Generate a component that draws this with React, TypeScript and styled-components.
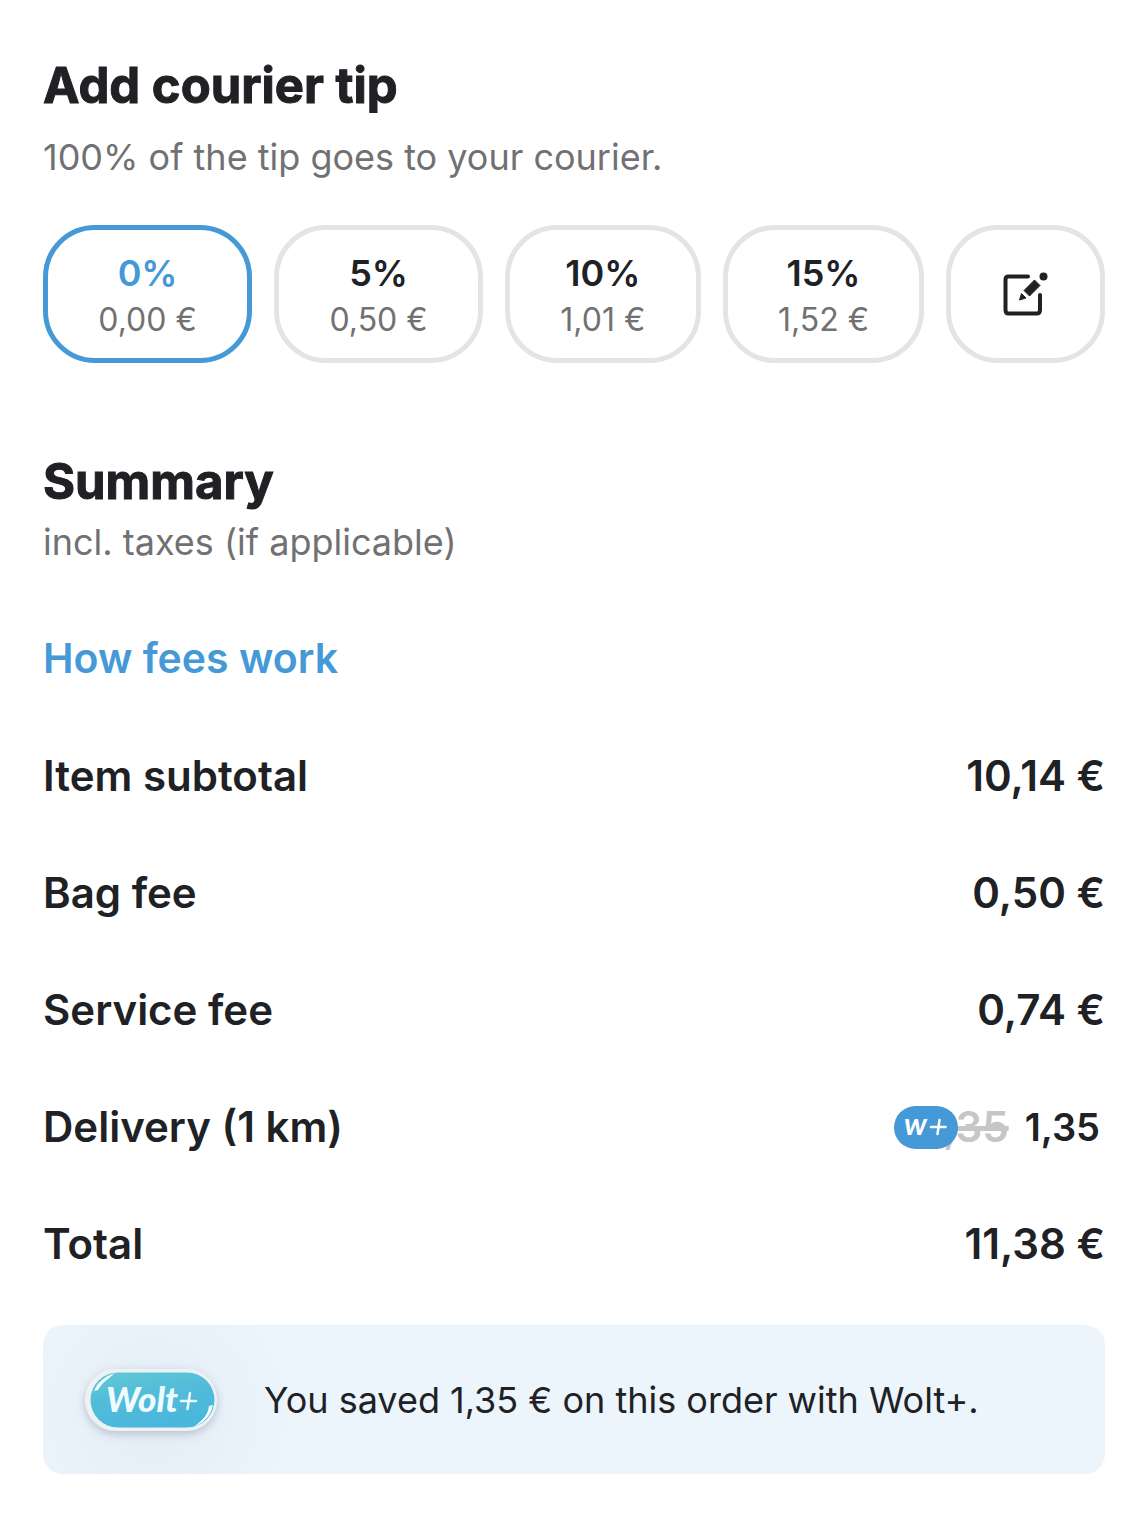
import React, { useState } from "react";
import styled, { createGlobalStyle } from "styled-components";

const ink = "#202125";
const muted = "#717173";
const blue = "#4599d6";

const GlobalStyle = createGlobalStyle`
  *, *::before, *::after { box-sizing: border-box; }
  body {
    margin: 0;
    background: #fff;
    color: ${ink};
    font-family: Inter, "Liberation Sans", sans-serif;
  }
`;

const Page = styled.main`
  padding: 56px 42px 62px 43px;
`;

const Heading = styled.h2`
  margin: 0;
  font-size: 49px;
  line-height: 60px;
  font-weight: 700;
  -webkit-text-stroke: 1px ${ink};
  stroke-linejoin: round;
`;

const Note = styled.p`
  margin: 0;
  font-size: 36px;
  line-height: 48px;
  color: ${muted};
`;

const TipSection = styled.section`
  display: flex;
  flex-direction: column;
`;

const TipNote = styled(Note)`
  margin-top: 17px;
`;

const TipList = styled.div`
  display: flex;
  gap: 22px;
  margin-top: 44px;
`;

const TipButton = styled.button<{ $selected?: boolean }>`
  flex: 1 1 auto;
  display: flex;
  flex-direction: column;
  align-items: center;
  justify-content: center;
  height: 138px;
  padding: 4px 48px 0;
  border: 5px solid ${(p) => (p.$selected ? blue : "#e4e4e4")};
  border-radius: 52px;
  background: #fff;
  color: ${(p) => (p.$selected ? blue : ink)};
  font-family: inherit;
  cursor: pointer;
`;

const TipPercent = styled.span`
  font-size: 36px;
  line-height: 48px;
  font-weight: 600;
`;

const TipAmount = styled.span`
  font-size: 32px;
  line-height: 46px;
  color: ${muted};
  white-space: nowrap;
`;

const SummarySection = styled.section`
  display: flex;
  flex-direction: column;
  align-items: stretch;
  margin-top: 89px;
`;

const SummaryNote = styled(Note)`
  margin-top: 6px;
`;

const FeesLink = styled.a`
  align-self: flex-start;
  margin-top: 62px;
  font-size: 41px;
  line-height: 60px;
  font-weight: 600;
  color: ${blue};
  text-decoration: none;
`;

const FeeList = styled.dl`
  margin: 29px 0 0;
`;

const FeeRow = styled.div`
  display: flex;
  align-items: center;
  justify-content: space-between;
  height: 117px;
  font-size: 42px;
  line-height: 60px;
  font-weight: 600;
`;

const FeeName = styled.dt`
  margin: 0;
`;

const FeeValue = styled.dd`
  display: flex;
  align-items: center;
  margin: 0;
`;

const OldPrice = styled.s`
  position: relative;
  color: #c6c6c6;
  text-decoration-thickness: 5px;
`;

const MemberTag = styled.span`
  position: absolute;
  top: 9px;
  right: 51px;
  display: block;
  width: 64px;
  height: 43px;

  svg {
    display: block;
  }
`;

const NewPrice = styled.span`
  margin: 0 5px 0 16px;
  font-size: 38px;
`;

const Banner = styled.aside`
  display: flex;
  align-items: center;
  gap: 40px;
  height: 149px;
  margin-top: 23px;
  padding: 0 36px;
  border-radius: 20px;
  background: radial-gradient(circle at 110px 90px, #e5edf6 20px, #ecf4fc 140px);
  font-size: 36px;
  line-height: 48px;
`;

const BannerText = styled.p`
  margin: 0;
`;

const TIPS = [
  { percent: "0%", amount: "0,00 €" },
  { percent: "5%", amount: "0,50 €" },
  { percent: "10%", amount: "1,01 €" },
  { percent: "15%", amount: "1,52 €" },
];

function EditIcon() {
  return (
    <svg width="48" height="48" viewBox="0 0 48 48" aria-hidden="true">
      <path
        d="M26 4.500H6.500Q3.500 4.500 3.500 7.500V38Q3.500 41.500 6.500 41.500H34.500Q38 41.500 38 38V23"
        fill="none"
        stroke={ink}
        strokeWidth="4"
        strokeLinecap="round"
      />
      <path d="M22 18.500L32.500 8L38 13.500L27.500 24Z" fill={ink} stroke={ink} strokeLinejoin="round" />
      <path d="M19.500 21.500L24 26L17.500 28Z" fill={ink} stroke={ink} strokeLinejoin="round" />
      <circle cx="41.500" cy="4.500" r="4" fill={ink} />
    </svg>
  );
}

function SmallBadge() {
  return (
    <svg width="64" height="43" viewBox="0 0 64 43" role="img" aria-label="W+">
      <rect width="64" height="43" rx="21.500" fill={blue} />
      <text x="10" y="29" fontFamily="Lato, sans-serif" fontSize="31" fontWeight="700" fontStyle="italic" fill="#fff">w</text>
      <path d="M45.500 14L43.500 28M37 21H51.500" stroke="#fff" strokeWidth="2.500" strokeLinecap="round" />
    </svg>
  );
}

function PlusBadge() {
  return (
    <svg width="145" height="90" viewBox="0 0 145 90" role="img" aria-label="Wolt+">
      <defs>
        <linearGradient id="pill" x1="0" y1="0" x2="0.400" y2="1">
          <stop offset="0" stopColor="#62c8d8" />
          <stop offset="0.500" stopColor="#52bcd9" />
          <stop offset="1" stopColor="#49b7dc" />
        </linearGradient>
        <filter id="soft" x="-20%" y="-30%" width="140%" height="170%">
          <feDropShadow dx="0" dy="3" stdDeviation="4" floodColor="#8795a3" floodOpacity="0.500" />
        </filter>
      </defs>
      <rect x="6" y="14" width="132" height="62" rx="31" fill="#eff2f3" filter="url(#soft)" />
      <rect x="11.500" y="17.500" width="124" height="55" rx="27.500" fill="url(#pill)" />
      <path d="M15 36Q20 23 36 18L29 24Q23 28 19 35Z" fill="#f5ffff" />
      <path d="M134 50Q131 65 115 72L124 64Q129 59 130 51Z" fill="#f5ffff" />
      <text x="27" y="57" fontFamily="Lato, sans-serif" fontSize="35" fontWeight="900" fontStyle="italic" fill="#eefbff">Wolt</text>
      <path d="M111 38L108.500 54M102 46H117" stroke="#eefbff" strokeWidth="2.500" strokeLinecap="round" />
    </svg>
  );
}

type FeeProps = { name: string; children: React.ReactNode };

function Fee({ name, children }: FeeProps) {
  return (
    <FeeRow>
      <FeeName>{name}</FeeName>
      <FeeValue>{children}</FeeValue>
    </FeeRow>
  );
}

export default function App() {
  const [tip, setTip] = useState(0);
  return (
    <>
      <GlobalStyle />
      <Page>
        <TipSection>
          <Heading>Add courier tip</Heading>
          <TipNote>100% of the tip goes to your courier.</TipNote>
          <TipList>
            {TIPS.map((t, i) => (
              <TipButton key={t.percent} type="button" $selected={tip === i} aria-pressed={tip === i} onClick={() => setTip(i)}>
                <TipPercent>{t.percent}</TipPercent>
                <TipAmount>{t.amount}</TipAmount>
              </TipButton>
            ))}
            <TipButton type="button" aria-label="Custom tip">
              <EditIcon />
            </TipButton>
          </TipList>
        </TipSection>
        <SummarySection>
          <Heading>Summary</Heading>
          <SummaryNote>incl. taxes (if applicable)</SummaryNote>
          <FeesLink href="#fees">How fees work</FeesLink>
          <FeeList>
            <Fee name="Item subtotal">10,14 €</Fee>
            <Fee name="Bag fee">0,50 €</Fee>
            <Fee name="Service fee">0,74 €</Fee>
            <Fee name="Delivery (1 km)">
              <OldPrice>
                1,35
                <MemberTag><SmallBadge /></MemberTag>
              </OldPrice>
              <NewPrice>1,35</NewPrice>
            </Fee>
            <Fee name="Total">11,38 €</Fee>
          </FeeList>
          <Banner>
            <PlusBadge />
            <BannerText>You saved 1,35 € on this order with Wolt+.</BannerText>
          </Banner>
        </SummarySection>
      </Page>
    </>
  );
}
